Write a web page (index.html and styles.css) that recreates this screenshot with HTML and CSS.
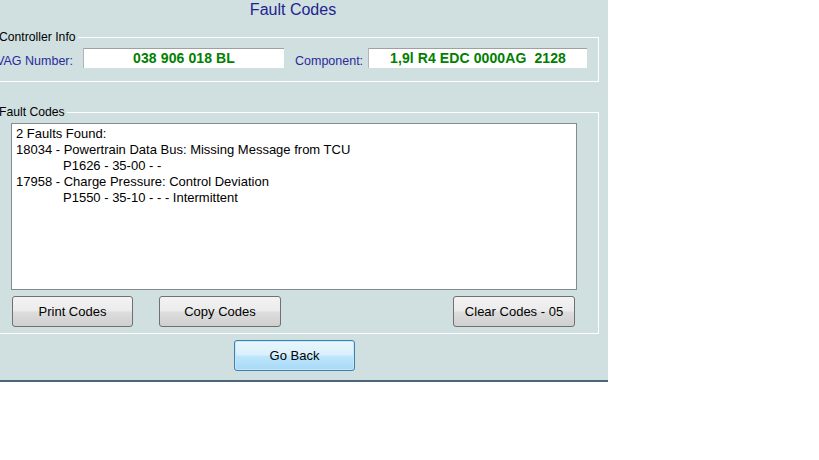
FILE: index.html
```html
<!DOCTYPE html>
<html>
<head>
<meta charset="utf-8">
<title>Fault Codes</title>
<link rel="stylesheet" href="styles.css">
</head>
<body>
<div class="app">
  <div class="title">Fault Codes</div>

  <fieldset class="group group-info">
    <legend>Controller Info</legend>
    <div class="info-row">
      <span class="label label-vag">VAG Number:</span>
      <div class="field field-vag">038 906 018 BL</div>
      <span class="label label-comp">Component:</span>
      <div class="field field-comp">1,9l R4 EDC 0000AG&nbsp;&nbsp;2128</div>
    </div>
  </fieldset>

  <fieldset class="group group-faults">
    <legend>Fault Codes</legend>
    <div class="faults-body">
      <div class="fault-list">
        <div class="line">2 Faults Found:</div>
        <div class="line">18034 - Powertrain Data Bus: Missing Message from TCU</div>
        <div class="line indent">P1626 - 35-00 - -</div>
        <div class="line">17958 - Charge Pressure: Control Deviation</div>
        <div class="line indent">P1550 - 35-10 - - - Intermittent</div>
      </div>
      <div class="button-row">
        <button class="btn btn-print">Print Codes</button>
        <button class="btn btn-copy">Copy Codes</button>
        <span class="spacer"></span>
        <button class="btn btn-clear">Clear Codes - 05</button>
      </div>
    </div>
  </fieldset>

  <div class="back-row">
    <button class="btn btn-back">Go Back</button>
  </div>
</div>
</body>
</html>
```

FILE: styles.css
```css
html, body {
  margin: 0;
  padding: 0;
  background: #ffffff;
}

body {
  font-family: "Liberation Sans", Arial, sans-serif;
  font-size: 12px;
  color: #000;
}

.app {
  width: 608px;
  height: 380px;
  background: #d0e0e0;
  border-bottom: 2px solid #4a6479;
  box-shadow: 0 2px 0 #aed4ef;
  overflow: hidden;
  box-sizing: content-box;
}

.title {
  height: 18px;
  line-height: 18px;
  font-size: 16px;
  color: #23238e;
  text-align: center;
  padding-right: 22px;
  padding-top: 1px;
  margin-bottom: -1px;
}

.group {
  margin: 0 0 0 -10px;
  padding: 0;
  width: 609px;
  box-sizing: border-box;
  border: 1px solid #ffffff;
  min-width: 0;
}

.group legend {
  margin-left: 8px;
  padding: 0 2px 0 0;
  font-size: 12.2px;
  line-height: 14px;
  color: #000;
}

.group-info {
  margin-top: 12px;
}

.info-row {
  display: flex;
  align-items: center;
  height: 20px;
  padding: 4px 0 13px 0;
}

.label {
  color: #2a2a9c;
  font-size: 12.5px;
  line-height: 20px;
  white-space: nowrap;
  margin-top: 3px;
  margin-bottom: -3px;
}

.label-vag {
  width: 92px;
  padding-right: 10px;
  box-sizing: border-box;
  text-align: right;
  flex: none;
}

.label-comp {
  margin-left: 11px;
  width: 73px;
  flex: none;
}

.field {
  height: 20px;
  box-sizing: border-box;
  background: #ffffff;
  border-top: 1px solid #a0a0a0;
  border-left: 1px solid #b4b4b4;
  color: #008000;
  font-weight: bold;
  font-size: 14px;
  letter-spacing: 0.1px;
  line-height: 18px;
  text-align: center;
  flex: none;
  white-space: nowrap;
}

.field-vag {
  width: 201px;
}

.field-comp {
  width: 219px;
}

.group-faults {
  margin-top: 23px;
}

.faults-body {
  padding: 4px 21px 6px 20px;
}

.fault-list {
  height: 167px;
  box-sizing: border-box;
  background: #ffffff;
  border: 1px solid #858a8f;
  padding: 2px 4px 0 4px;
  font-size: 13px;
}

.line {
  line-height: 16px;
  white-space: pre;
}

.line.indent {
  padding-left: 47px;
}

.button-row {
  display: flex;
  margin-top: 6px;
  padding: 0 2px 0 1px;
}

.spacer {
  flex: 1;
}

.btn {
  height: 31px;
  box-sizing: border-box;
  font-family: "Liberation Sans", Arial, sans-serif;
  font-size: 13px;
  color: #000;
  border: 1px solid #707070;
  border-radius: 3px;
  background: linear-gradient(#f3f3f3 0%, #ebebeb 48%, #dddddd 52%, #cfcfcf 100%);
  padding: 0;
  margin: 0;
}

.btn-print {
  width: 121px;
}

.btn-copy {
  width: 122px;
  margin-left: 26px;
}

.btn-clear {
  width: 122px;
}

.back-row {
  display: flex;
  margin-top: 6px;
  padding-left: 234px;
}

.btn-back {
  width: 121px;
  border: 1px solid #3c7fb1;
  box-shadow: inset 0 0 0 1px #c8e8fa;
  background: linear-gradient(#eaf6fd 0%, #d9f0fc 48%, #bee6fd 52%, #a7d9f5 100%);
}
```
